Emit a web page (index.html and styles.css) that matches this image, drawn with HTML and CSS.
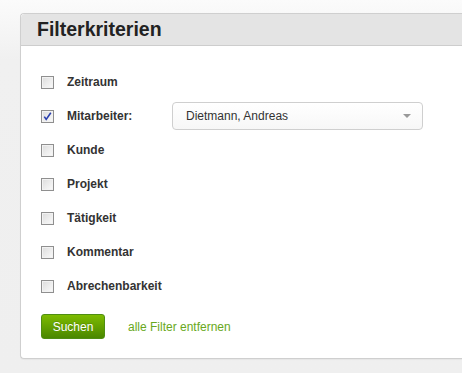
FILE: index.html
```html
<!DOCTYPE html>
<html lang="de">
<head>
<meta charset="utf-8">
<title>Filterkriterien</title>
<link rel="stylesheet" href="styles.css">
</head>
<body>
<div class="page">
  <section class="panel">
    <header class="panel-head"><h2 class="panel-title">Filterkriterien</h2></header>
    <div class="panel-body">
      <div class="row"><span class="cb"></span><span class="lbl">Zeitraum</span></div>
      <div class="row">
        <span class="cb checked"><svg viewBox="0 0 11 11" width="11" height="11"><path d="M2.3 5.6 L4.2 8.4 L8.8 1.8" fill="none" stroke="#2a3fae" stroke-width="1.6"/></svg></span>
        <span class="lbl lbl-wide">Mitarbeiter:</span>
        <div class="select"><span class="select-text">Dietmann, Andreas</span><span class="caret"></span></div>
      </div>
      <div class="row"><span class="cb"></span><span class="lbl">Kunde</span></div>
      <div class="row"><span class="cb"></span><span class="lbl">Projekt</span></div>
      <div class="row"><span class="cb"></span><span class="lbl">Tätigkeit</span></div>
      <div class="row"><span class="cb"></span><span class="lbl">Kommentar</span></div>
      <div class="row"><span class="cb"></span><span class="lbl">Abrechenbarkeit</span></div>
      <div class="actions">
        <button class="btn">Suchen</button>
        <a class="link" href="#">alle Filter entfernen</a>
      </div>
    </div>
  </section>
</div>
</body>
</html>
```
FILE: styles.css
```css
html, body {
  margin: 0;
  padding: 0;
}
body {
  width: 462px;
  height: 373px;
  overflow: hidden;
  background: linear-gradient(#fbfbfb, #f0f0f0 60px, #efefef);
  font-family: "Liberation Sans", Arial, sans-serif;
  color: #333;
}
.page {
  padding: 13px 0 0 20px;
}
.panel {
  background: #fff;
  border: 1px solid #cfcfcf;
  border-right: none;
  border-radius: 4px 0 0 4px;
  box-shadow: 0 1px 1px rgba(0,0,0,0.04);
}
.panel-head {
  height: 31px;
  background: #e4e4e4;
  border-bottom: 1px solid #cdcdcd;
  border-radius: 4px 0 0 0;
  display: flex;
  align-items: center;
  padding-left: 16px;
}
.panel-title {
  margin: 0;
  font-size: 19.5px;
  font-weight: bold;
  color: #222;
  line-height: 1;
}
.panel-body {
  padding: 19px 0 19px 20px;
}
.row {
  height: 34px;
  display: flex;
  align-items: center;
}
.cb {
  box-sizing: border-box;
  width: 13px;
  height: 13px;
  border: 1px solid #8f8f8f;
  background: linear-gradient(135deg, #dcdcdc, #fbfbfb);
  box-shadow: inset 0 0 0 1px #f2f2f2;
  display: flex;
  align-items: center;
  justify-content: center;
  flex: none;
}
.cb svg { display: block; }
.lbl {
  margin-left: 13px;
  font-size: 12px;
  font-weight: bold;
  color: #333;
}
.lbl-wide {
  width: 105px;
  flex: none;
}
.select {
  box-sizing: border-box;
  width: 251px;
  height: 28px;
  border: 1px solid #cfcfcf;
  border-radius: 4px;
  background: linear-gradient(#fff, #f7f7f7);
  display: flex;
  align-items: center;
  justify-content: space-between;
  padding: 0 11px 0 13px;
}
.select-text {
  font-size: 12px;
  color: #333;
}
.caret {
  width: 0;
  height: 0;
  border-left: 4px solid transparent;
  border-right: 4px solid transparent;
  border-top: 4px solid #999;
}
.actions {
  margin-top: 11px;
  display: flex;
  align-items: center;
  gap: 23px;
}
.btn {
  box-sizing: border-box;
  width: 64px;
  height: 25px;
  border: 1px solid #4f8e12;
  border-radius: 3px;
  background: linear-gradient(#7dbb00, #4a8700);
  color: #fff;
  font-family: "Liberation Sans", Arial, sans-serif;
  font-size: 12px;
  padding: 0;
  text-shadow: 0 -1px 0 rgba(0,0,0,0.15);
}
.link {
  font-size: 12px;
  color: #68a81c;
  text-decoration: none;
}
```
